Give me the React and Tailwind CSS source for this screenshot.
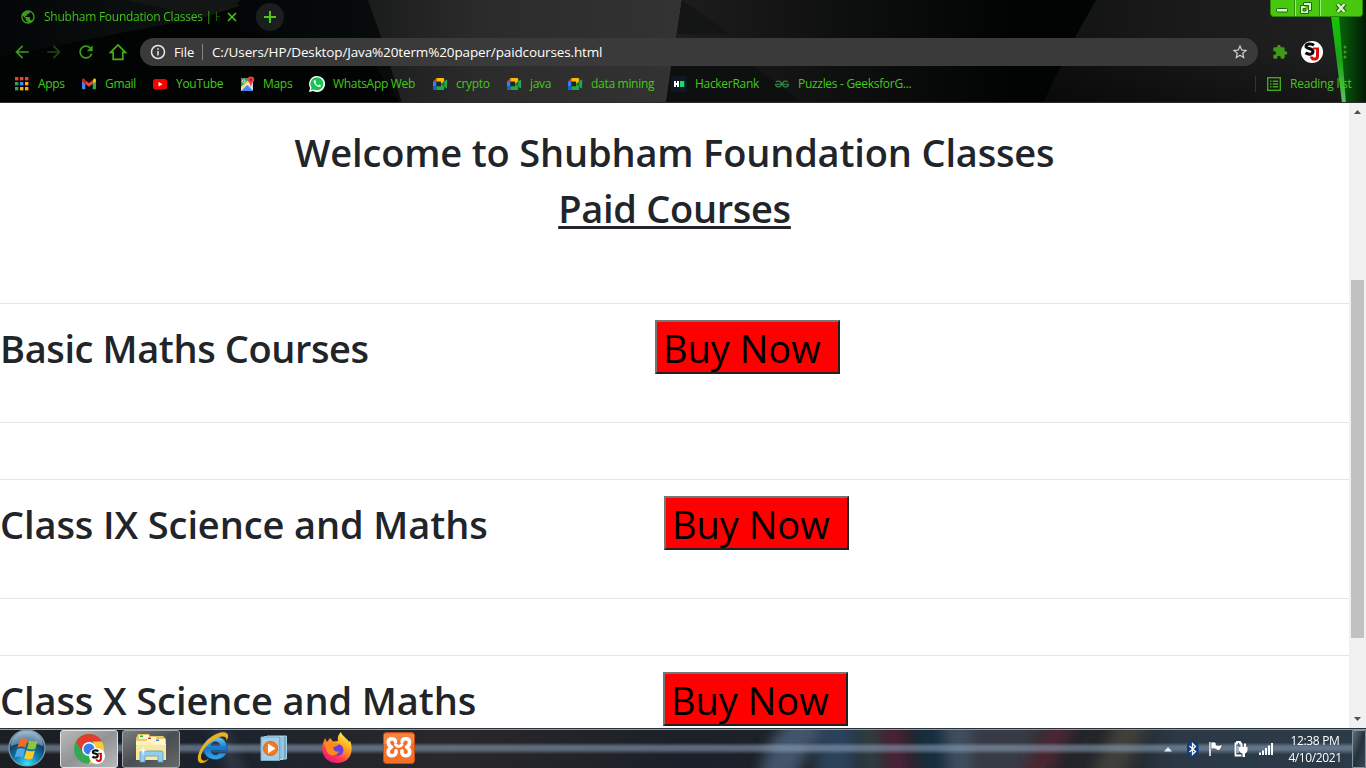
import React from "react";
import { SiGeeksforgeeks } from "react-icons/si";

const PATHS = {
  back: "M20 11H7.83l5.59-5.59L12 4l-8 8 8 8 1.41-1.41L7.83 13H20v-2z",
  forward: "M12 4l-1.41 1.41L16.17 11H4v2h12.17l-5.58 5.59L12 20l8-8z",
  reload:
    "M17.65 6.35C16.2 4.9 14.21 4 12 4c-4.42 0-7.99 3.58-7.99 8s3.57 8 7.99 8c3.73 0 6.84-2.55 7.73-6h-2.08c-.82 2.33-3.04 4-5.65 4-3.31 0-6-2.69-6-6s2.69-6 6-6c1.66 0 3.14.69 4.22 1.78L13 11h7V4l-2.35 2.35z",
  puzzle:
    "M20.5 11H19V7c0-1.1-.9-2-2-2h-4V3.5C13 2.12 11.88 1 10.5 1S8 2.12 8 3.5V5H4c-1.1 0-1.99.9-1.99 2v3.8H3.5c1.49 0 2.7 1.21 2.7 2.7s-1.21 2.7-2.7 2.7H2V20c0 1.1.9 2 2 2h3.8v-1.5c0-1.49 1.21-2.7 2.7-2.7 1.49 0 2.7 1.21 2.7 2.7V22H17c1.1 0 2-.9 2-2v-4h1.5c1.38 0 2.5-1.12 2.5-2.5S21.88 11 20.5 11z",
  star: "M22 9.24l-7.19-.62L12 2 9.19 8.63 2 9.24l5.46 4.73L5.82 21 12 17.27 18.18 21l-1.63-7.03L22 9.24zM12 15.4l-3.76 2.27 1-4.28-3.32-2.88 4.38-.38L12 6.1l1.71 4.04 4.38.38-3.32 2.88 1 4.28L12 15.4z",
  globe:
    "M12 2C6.48 2 2 6.48 2 12s4.48 10 10 10 10-4.48 10-10S17.52 2 12 2zm-1 17.93c-3.95-.49-7-3.85-7-7.93 0-.62.08-1.21.21-1.79L9 15v1c0 1.1.9 2 2 2v1.93zm6.9-2.54c-.26-.81-1-1.39-1.9-1.39h-1v-3c0-.55-.45-1-1-1H8v-2h2c.55 0 1-.45 1-1V7h2c1.1 0 2-.9 2-2v-.41c2.93 1.19 5 4.06 5 7.41 0 2.08-.8 3.97-2.1 5.39z",
};

function Glyph({ name, className }) {
  return (
    <svg viewBox="0 0 24 24" fill="currentColor" className={className}>
      <path d={PATHS[name]} />
    </svg>
  );
}

function ThemeArt() {
  return (
    <svg className="absolute inset-0 h-full w-full" viewBox="0 0 1366 103" preserveAspectRatio="none">
      <defs>
        <linearGradient id="tGray" x1="0" x2="1">
          <stop offset="0" stopColor="#1b1c1c" />
          <stop offset="0.35" stopColor="#2b2b2b" />
          <stop offset="1" stopColor="#333333" />
        </linearGradient>
        <linearGradient id="tLeft" x1="0" x2="1">
          <stop offset="0" stopColor="#030606" />
          <stop offset="1" stopColor="#121616" />
        </linearGradient>
        <linearGradient id="tMid" x1="0" x2="1">
          <stop offset="0" stopColor="#1e1e1e" />
          <stop offset="0.55" stopColor="#0d0e0e" />
          <stop offset="1" stopColor="#020303" />
        </linearGradient>
        <linearGradient id="tRight" x1="0" x2="1">
          <stop offset="0" stopColor="#111212" />
          <stop offset="0.5" stopColor="#1b1b1b" />
          <stop offset="1" stopColor="#202121" />
        </linearGradient>
        <linearGradient id="tShade" x1="0.3" y1="0" x2="0" y2="1">
          <stop offset="0.3" stopColor="#000" stopOpacity="0" />
          <stop offset="1" stopColor="#000" stopOpacity="0.500" />
        </linearGradient>
        <linearGradient id="tEdge" x1="0" x2="1">
          <stop offset="0" stopColor="#06720a" />
          <stop offset="1" stopColor="#041806" />
        </linearGradient>
        <linearGradient id="tBeam" x1="0" y1="0" x2="0" y2="1">
          <stop offset="0" stopColor="#14c60a" />
          <stop offset="0.5" stopColor="#18a515" />
          <stop offset="1" stopColor="#5fbf5f" />
        </linearGradient>
      </defs>
      <rect width="1366" height="103" fill="#020404" />
      <path d="M0 57L120 33 205 17 243 0H0z" fill="url(#tLeft)" />
      <path d="M205 17L240 6 235 0H125z" fill="#141616" />
      <path d="M240 0h440L666 103H400L375 66 240 30z" fill="url(#tLeft)" />
      <path d="M368 0h314L666 103H402L380 34z" fill="url(#tGray)" />
      <path d="M682 0h330v103H666z" fill="url(#tMid)" />
      <path d="M682 0l48 34h-53z" fill="#141515" />
      <path d="M671 66h82l50 37H666z" fill="#0e0f0f" />
      <path d="M1096 0h270v103H1043l34-69z" fill="url(#tRight)" />
      <path d="M1096 0h270v103H1043l34-69z" fill="url(#tShade)" />
      <path d="M1334 0h32v103h-20z" fill="url(#tEdge)" />
      <path d="M1331 16h8l7 87h-4z" fill="url(#tBeam)" />
      <rect y="102" width="1366" height="1" fill="#2a2b2b" />
    </svg>
  );
}

function AppsIcon() {
  const colors = ["#ea4335", "#ea4335", "#ea4335", "#34a05a", "#4285f4", "#fbab05", "#34a05a", "#fbab05", "#fbab05"];
  return (
    <svg viewBox="0 0 16 16" className="h-4 w-4">
      {colors.map((c, i) => (
        <rect key={i} x={1 + (i % 3) * 5} y={1 + Math.floor(i / 3) * 5} width="3.4" height="3.4" fill={c} />
      ))}
    </svg>
  );
}

function GmailIcon() {
  return (
    <svg viewBox="0 0 16 16" className="h-4 w-4">
      <path d="M1 4.3v8.2c0 .5.4.8.8.8h2.5V7z" fill="#4285f4" />
      <path d="M15 4.3v8.2c0 .5-.4.8-.8.8h-2.5V7z" fill="#34a853" />
      <path d="M11.7 4.4V8L15 5.400V4c0-1.300-1.500-1.900-2.400-1.200z" fill="#fbbc04" />
      <path d="M4.300 8V4.300L8 7.100l3.700-2.800V8L8 10.800z" fill="#ea4335" />
      <path d="M1 4v1.400L4.300 8V4.400l-.9-1.600C2.500 2.100 1 2.700 1 4z" fill="#c5221f" />
    </svg>
  );
}

function YouTubeIcon() {
  return (
    <svg viewBox="0 0 16 16" className="h-4 w-4">
      <rect x="1" y="3" width="14" height="10.500" rx="2.500" fill="#ff0000" />
      <path d="M6.500 6v4.500l4-2.250z" fill="#fff" />
    </svg>
  );
}

function MapsIcon() {
  return (
    <svg viewBox="0 0 16 16" className="h-4 w-4">
      <path d="M2 2.500h12v12.500H2z" fill="#f1f3f4" />
      <path d="M2 2.500h9L2 11z" fill="#2aa14d" />
      <path d="M2 15l6.300-6.300L14 14.500v.5z" fill="#4285f4" />
      <path d="M2 11.500l9-9h2L2 14z" fill="#fdd35a" />
      <path d="M8.300 8.700L14 14.500V7z" fill="#d9dbde" />
      <circle cx="4.700" cy="5.200" r="1.400" fill="none" stroke="#fff" strokeWidth="0.800" />
      <path d="M11.900.5a3.300 3.300 0 0 0-3.300 3.300c0 2.400 2.700 3 3.100 6.700h.4c.4-3.700 3.100-4.300 3.100-6.700A3.300 3.300 0 0 0 11.900.5z" fill="#ea4335" />
      <circle cx="11.900" cy="3.800" r="1.200" fill="#8f1d16" />
    </svg>
  );
}

function WhatsAppIcon() {
  return (
    <svg viewBox="0 0 16 16" className="h-4 w-4">
      <path d="M0 16l1.100-4.100A8 8 0 1 1 4.200 15z" fill="#fff" />
      <path d="M1.700 14.300l.8-2.800a6.500 6.500 0 1 1 2.200 2z" fill="#18c450" />
      <path d="M5.300 4.300c-1 .8-.8 2.200.6 4 1.500 2 3.600 3.100 5 2.600.8-.3 1.100-1 1-1.600L10 8.400l-.9 1C8 8.900 7 8 6.500 6.900l.7-.9-.8-1.800z" fill="#fff" />
    </svg>
  );
}

function MeetIcon() {
  return (
    <svg viewBox="0 0 16 16" className="h-4 w-4">
      <path d="M4.500 2v3.700H1z" fill="#ea4335" />
      <path d="M4.500 2h6.800c.5 0 .9.400.9.900V7L9 8V5.700H4.500z" fill="#fbb904" />
      <path d="M1 5.700h3.500v4.600H1z" fill="#2684fc" />
      <path d="M1 10.300h3.500V14H2c-.6 0-1-.400-1-1z" fill="#1565d8" />
      <path d="M4.500 5.700H9v4.600H4.500z" fill="#26231f" />
      <path d="M4.500 10.300H9V8l3.200 1v4c0 .6-.4 1-1 1H4.500z" fill="#22a94b" />
      <path d="M9 8l3.200-3v6z" fill="#147a37" />
      <path d="M12.200 5.500l2-1.700c.4-.3.900-.1.900.4v7.600c0 .5-.5.7-.9.4l-2-1.700z" fill="#22a94b" />
    </svg>
  );
}

function HackerRankIcon() {
  return (
    <svg viewBox="0 0 16 16" className="h-4 w-4">
      <rect width="16" height="16" rx="2" fill="#0e1722" />
      <path d="M3 5h2v2h1V5h2v6H6V9H5v2H3z" fill="#fff" />
      <rect x="9" y="5" width="4.300" height="6" fill="#10e06a" />
    </svg>
  );
}

const BOOKMARKS = [
  { label: "Apps", icon: <AppsIcon />, box: "w-[67px]" },
  { label: "Gmail", icon: <GmailIcon />, box: "w-[71px]" },
  { label: "YouTube", icon: <YouTubeIcon />, box: "w-[87px]" },
  { label: "Maps", icon: <MapsIcon />, box: "w-[70px]" },
  { label: "WhatsApp Web", icon: <WhatsAppIcon />, box: "w-[123px]" },
  { label: "crypto", icon: <MeetIcon />, box: "w-[74px]" },
  { label: "java", icon: <MeetIcon />, box: "w-[61px]" },
  { label: "data mining", icon: <MeetIcon />, box: "w-[104px]" },
  { label: "HackerRank", icon: <HackerRankIcon />, box: "w-[103px]" },
  {
    label: "Puzzles - GeeksforG...",
    icon: <SiGeeksforgeeks className="mx-px h-[14px] w-[14px] text-[#2f8d46]" />,
    box: "w-[150px]",
  },
];

function TabStrip() {
  return (
    <div className="relative flex h-[34px] items-center pl-5">
      <Glyph name="globe" className="h-4 w-4 text-[#3f9a1c]" />
      <div className="ml-2 h-[18px] w-[176px] bg-gradient-to-r from-[#43cb17] from-[93%] to-[#43cb17]/25 to-[100%] bg-clip-text text-xs leading-[18px] tracking-[-0.25px] whitespace-nowrap text-transparent">
        Shubham Foundation Classes | H
      </div>
      <svg viewBox="0 0 10 10" className="ml-[7px] h-[10px] w-[10px]" stroke="#4cc21b" strokeWidth="1.600">
        <path d="M1 1l8 8M9 1L1 9" />
      </svg>
      <div className="ml-[19px] flex h-7 w-7 items-center justify-center rounded-full bg-[#1b1e1e]">
        <svg viewBox="0 0 12 12" className="h-3 w-3" stroke="#4ccb14" strokeWidth="2">
          <path d="M6 0v12M0 6h12" />
        </svg>
      </div>
      <div className="absolute top-0 right-[3px] flex h-[17px] w-[93px] overflow-hidden rounded-b-[4px] border border-t-0 border-[#2d850a] bg-[#49c810]">
        <svg viewBox="0 0 91 16" className="h-4 w-[91px]">
          <path d="M24.500 0v16M49.500 0v16" stroke="#99ec70" strokeWidth="1" />
          <path d="M23.500 0v16M48.500 0v16" stroke="#2f900c" strokeWidth="1" />
          <rect x="5.500" y="8.500" width="11" height="3.500" rx="1" fill="#d6f7c6" stroke="#23660c" />
          <path d="M32.500 2.500h8v8h-3v3h-8v-8h3z" fill="#d6f7c6" stroke="#23660c" />
          <path d="M37.500 10.500v-5h-5M32 8.500h3v2.500h-3z" fill="#49c810" stroke="#23660c" />
          <path d="M66 4l8 8M74 4l-8 8" stroke="#23660c" strokeWidth="4.500" />
          <path d="M66.500 4l7 8M73.500 4l-7 8" stroke="#d6f7c6" strokeWidth="2.500" />
        </svg>
      </div>
    </div>
  );
}

function AvatarLogo({ className }) {
  return (
    <svg viewBox="0 0 20 20" className={className} fill="none">
      <path d="M12 3.200C9 1 4 2 4 4.500s7 1.500 7 4.800-4.500 3.800-7.500 1.500" stroke="#0a0a0a" strokeWidth="3" />
      <path d="M15.500 6v8c0 4-6 4-6 .5" stroke="#dc0a0a" strokeWidth="3" />
      <path d="M11 6.500h6" stroke="#dc0a0a" strokeWidth="2" />
    </svg>
  );
}

function Toolbar() {
  return (
    <div className="relative flex h-9 items-center pl-3 text-[#3f9a1c]">
      <Glyph name="back" className="h-5 w-5" />
      <Glyph name="forward" className="ml-3 h-5 w-5 text-[#1e4711]" />
      <Glyph name="reload" className="ml-3 h-5 w-5" />
      <svg viewBox="0 0 20 20" className="ml-3 h-5 w-5" fill="none" stroke="#43b018" strokeWidth="1.700">
        <path d="M2.600 10.300L10 3l7.400 7.300H14.800v7H5.200v-7z" />
      </svg>
      <div className="ml-3 flex h-7 w-[1118px] items-center rounded-full bg-[#3a3a3a] pl-[10px] text-[13px] text-white">
        <svg viewBox="0 0 16 16" className="h-4 w-4" fill="none" stroke="#e8e8e8" strokeWidth="1.500">
          <circle cx="8" cy="8" r="6.500" />
          <path d="M8 7v4.500M8 4.300v1.500" />
        </svg>
        <span className="ml-2 w-7 pt-px tracking-[-0.1px] whitespace-nowrap">File</span>
        <span className="h-4 w-px bg-[#858585]" />
        <span className="ml-[9px] flex-1 pt-px text-[13.5px] tracking-[-0.13px] whitespace-nowrap">
          C:/Users/HP/Desktop/Java%20term%20paper/paidcourses.html
        </span>
        <Glyph name="star" className="mr-[9px] h-[18px] w-[18px] text-[#cfcfcf]" />
      </div>
      <Glyph name="puzzle" className="ml-[14px] h-4 w-4" />
      <div className="ml-[13px] flex h-[22px] w-[22px] items-center justify-center rounded-full bg-white">
        <AvatarLogo className="h-5 w-5" />
      </div>
      <svg viewBox="0 0 4 14" className="ml-5 h-[14px] w-1" fill="#3f9a1c">
        <circle cx="2" cy="2" r="1.500" />
        <circle cx="2" cy="7" r="1.500" />
        <circle cx="2" cy="12" r="1.500" />
      </svg>
    </div>
  );
}

function BookmarksBar() {
  return (
    <div className="relative flex h-[33px] items-center pb-[5px] pl-[14px] text-xs text-[#43cb17]">
      {BOOKMARKS.map((b) => (
        <div key={b.label} className={"flex shrink-0 items-center gap-2 whitespace-nowrap " + b.box}>
          <span className="w-4 shrink-0">{b.icon}</span>
          <span className="tracking-[-0.3px]">{b.label}</span>
        </div>
      ))}
      <div className="ml-auto flex items-center pr-[14px]">
        <span className="mr-[11px] h-4 w-px bg-[#234217]" />
        <svg viewBox="0 0 14 14" className="h-[14px] w-[14px]" fill="none" stroke="#3fa81c" strokeWidth="1.400">
          <rect x="0.700" y="0.700" width="12.600" height="12.600" />
          <path d="M3 4.200h1.500M3 7h1.500M3 9.800h1.500M5.700 4.200h5.500M5.700 7h5.500M5.700 9.800h5.500" />
        </svg>
        <span className="ml-[9px] w-[62px] tracking-[-0.22px] whitespace-nowrap">Reading list</span>
      </div>
    </div>
  );
}

const COURSES = [
  { name: "Basic Maths Courses", box: "w-[655px]", track: "tracking-[-0.4px]" },
  { name: "Class IX Science and Maths", box: "w-[664px]", track: "tracking-[-0.1px]" },
  { name: "Class X Science and Maths", box: "w-[663px]", track: "tracking-[-0.1px]" },
];

function Course({ course }) {
  return (
    <section className="mb-14 flex h-[120px] shrink-0 items-start border-y border-[#e5e5e6] pt-4">
      <h2 className={"shrink-0 pt-1 text-[38px] leading-[48px] font-semibold whitespace-nowrap " + course.box + " " + course.track}>
        {course.name}
      </h2>
      <button className="h-[54px] w-[185px] border-2 border-t-[#767676] border-r-[#212121] border-b-[#212121] border-l-[#767676] bg-[#ff0000] pt-[3px] pl-[6px] text-left text-[38px] leading-[47px] whitespace-nowrap text-black">
        Buy Now
      </button>
    </section>
  );
}

function Scrollbar() {
  return (
    <div className="flex w-[17px] shrink-0 flex-col items-center bg-[#f1f1f1]">
      <svg viewBox="0 0 17 17" className="h-[17px] w-[17px]">
        <path d="M5 11h7L8.500 7z" fill="#505050" />
      </svg>
      <div className="mt-[160px] h-[358px] w-[13px] bg-[#c1c1c1]" />
      <svg viewBox="0 0 17 17" className="mt-auto h-[17px] w-[17px]">
        <path d="M5 6h7l-3.500 4z" fill="#505050" />
      </svg>
    </div>
  );
}

function StartOrb() {
  return (
    <svg viewBox="0 0 38 38" className="h-[38px] w-[38px]">
      <defs>
        <radialGradient id="orb" cx="0.5" cy="0.95" r="0.9">
          <stop offset="0" stopColor="#3ee4fb" />
          <stop offset="0.35" stopColor="#1286b8" />
          <stop offset="0.7" stopColor="#10426b" />
          <stop offset="1" stopColor="#7ba1bb" />
        </radialGradient>
      </defs>
      <circle cx="19" cy="19" r="18" fill="url(#orb)" stroke="#7d9cb0" strokeWidth="1.200" />
      <path d="M3 17a16 15 0 0 1 32 0c-9-4-23-4-32 0z" fill="#c6dcea" opacity="0.4" />
      <g transform="translate(-2.200 -2) scale(1.170)">
        <path d="M12 10.500c2.500-1.300 4.500-1 6.800.3l-2 7c-2.200-1.300-4.300-1.400-6.800-.2z" fill="#f06a28" />
        <path d="M20 11.300c2.300 1.200 4.600 1.300 7.300.2l-2 7c-2.500 1.200-4.700 1-7.100-.2z" fill="#8cc63e" />
        <path d="M9.600 19c2.400-1.200 4.500-1.100 6.800.2l-2 7c-2.300-1.300-4.300-1.300-6.800-.2z" fill="#52a9e8" />
        <path d="M17.700 19.800c2.400 1.200 4.600 1.300 7.200.2l-2 7c-2.500 1.200-4.800 1-7.200-.2z" fill="#fcc927" />
      </g>
    </svg>
  );
}

function ChromeIcon() {
  return (
    <div className="relative h-8 w-8">
      <svg viewBox="0 0 32 32" className="h-8 w-8">
        <circle cx="16" cy="16" r="15" fill="#34a853" />
        <path d="M3 8.500A15 15 0 0 1 29 8.500H16L10 20z" fill="#e33b2e" />
        <path d="M29 8.500A15 15 0 0 1 15.500 31l7-11.500L20 8.500z" fill="#fcc934" />
        <circle cx="16" cy="16" r="7" fill="#fff" />
        <circle cx="16" cy="16" r="5.500" fill="#3b7ded" />
      </svg>
      <div className="absolute top-[15px] left-[16px] h-4 w-4 rounded-full bg-white p-px">
        <AvatarLogo className="h-[14px] w-[14px]" />
      </div>
    </div>
  );
}

function FolderIcon() {
  return (
    <svg viewBox="0 0 34 32" className="h-8 w-[34px]">
      <path d="M3 3l1-2h11l1 2h13l3 3v20H2V5z" fill="#e9c869" />
      <path d="M5 2h10v4H5zM13 4h9v4h-9zM21 6h10v5H21z" fill="#fff7d0" />
      <path d="M6 2.500h3v1.500H6z" fill="#2cae3c" />
      <path d="M14 4.500h3V6h-3z" fill="#d63b28" />
      <path d="M22 6.500h3V8h-3z" fill="#3b82d6" />
      <path d="M2 8h18l2 3h10v16H2z" fill="#f9e7a0" />
      <path d="M2 8h18l2 3h10v1H2z" fill="#fff3c2" />
      <path d="M6 29v-9c0-1.500.5-2 2-2h19c1.500 0 2 .5 2 2v9h-5v-6H11v6z" fill="#93cdec" stroke="#579bc7" strokeWidth="0.800" />
      <path d="M9 13l.8 4 3.200.8-3.200.8L9 23l-.8-4.400L5 17.800l3.200-.8z" fill="#fff" />
    </svg>
  );
}

function ExplorerIcon() {
  return (
    <svg viewBox="0 0 34 34" className="h-[34px] w-[34px]">
      <defs>
        <linearGradient id="ie" x1="0" y1="0" x2="0" y2="1">
          <stop offset="0" stopColor="#79cdf7" />
          <stop offset="0.5" stopColor="#1676c8" />
          <stop offset="1" stopColor="#36a9ee" />
        </linearGradient>
      </defs>
      <path
        d="M31 19.500H15c.5 5 6 5.500 8 2.500h7.500C27 31 8.500 31.500 7.500 18 7 2.500 31 1 31 17zM15 14.500h9c-.5-5-8.500-5-9 0z"
        fill="url(#ie)"
        stroke="#0a4887"
        strokeWidth="0.600"
      />
      <path d="M30.500 9.500C31 3 22 5 13 12.500 5 20 3 28 7 29.500c2 .6 4-.5 6-2-3 4-7 5.500-9.500 4C-1 28 4 16 12 8.500 20 1.500 29-.5 31.500 3c1.200 1.800.5 4-1 6.500z" fill="#eab221" />
    </svg>
  );
}

function MediaIcon() {
  return (
    <svg viewBox="0 0 28 28" className="h-7 w-7">
      <path d="M7 2h19.500v23H7z" fill="#73a9cb" stroke="#a9cde0" />
      <path d="M4 2.500h19v23H4z" fill="#8fbdd9" stroke="#b6d7e9" />
      <path d="M1 3h18.500v23.500H1z" fill="#a7cde4" stroke="#77abc9" />
      <circle cx="10.500" cy="14.500" r="7" fill="#f37a1d" stroke="#e0660b" />
      <path d="M8 9.500v10l7.500-5z" fill="#fff" />
    </svg>
  );
}

function FirefoxIcon() {
  return (
    <svg viewBox="0 0 32 32" className="h-8 w-8">
      <defs>
        <linearGradient id="fox" x1="0.85" y1="0.1" x2="0.3" y2="1">
          <stop offset="0" stopColor="#fff13a" />
          <stop offset="0.4" stopColor="#ff9b22" />
          <stop offset="0.75" stopColor="#ff3750" />
          <stop offset="1" stopColor="#e31587" />
        </linearGradient>
      </defs>
      <path d="M20 0c1 4 6 6 8 10l1-1.500C33 18 30 31 16 31 5 31-1 22 2 11l2-5 2 4 3-4 3 3.500 5-.5C16 5 18 2 20 0z" fill="url(#fox)" />
      <circle cx="16.500" cy="18" r="6" fill="#6a43d6" />
      <path d="M3 11c3-2 7-1.500 9 0l6 .8c-1 3-5 2-6 4.200 1 3 3 4 6 3.500-3 6-12 5-13-3z" fill="#ff8a1c" />
    </svg>
  );
}

function XamppIcon() {
  return (
    <svg viewBox="0 0 32 32" className="h-8 w-8">
      <rect x="0.500" y="0.500" width="31" height="31" rx="3" fill="#f3702b" stroke="#c44c10" />
      <path d="M1 2h30v8C20 7 10 8 1 12z" fill="#f89a62" opacity="0.5" />
      <g fill="none" stroke="#fff" strokeWidth="3.600" strokeLinecap="round" strokeLinejoin="round">
        <path d="M12.500 9.500C12 7.600 10.800 6.800 9 6.800c-4.800 0-5 6-.5 8.200-4.700 2.500-4.200 8.700.5 8.700 3.200 0 4.500-2.200 4-5" />
        <path d="M19 9.500c.5-1.900 2-2.700 3.800-2.700 4.700 0 5 6 .7 8.200 4.700 2.500 4 8.700-.7 8.700-3.200 0-4.300-2.200-3.800-5" />
        <path d="M12.500 12.500c1.500 2.500 5 2.500 6.500 0" strokeWidth="3" />
      </g>
    </svg>
  );
}

function TrayIcons() {
  return (
    <svg viewBox="0 0 112 20" className="h-5 w-28">
      <path d="M1 12.500L5 8l4 4.500z" fill="#e7edf2" />
      <rect x="24" y="2" width="11.500" height="16" rx="5.500" fill="#0f3a7c" />
      <path d="M26.500 7l6 5.500-3 3v-11l3 3-6 5.500" fill="none" stroke="#fff" strokeWidth="1.300" />
      <path d="M47 3v14" stroke="#fff" strokeWidth="1.500" />
      <path d="M48 3.500c2-.8 4-.5 5 .5v2c2 .7 4 .5 6-.5v1.500l-2 4c-2 .8-3 .3-4-.8-2-.8-3-.7-5 0z" fill="#fff" stroke="#18222c" strokeWidth="0.500" />
      <path d="M79 4.500h-2v-1.500h-3v1.500h-1.500v12h6" fill="none" stroke="#fff" strokeWidth="1.800" />
      <path d="M74.500 7h1v7h-1z" fill="#fff" />
      <path d="M76 8h8.500v3c0 2.500-2.500 3.500-2.500 3.500V18h-2.500v-3.500S76 13.500 76 11zM77.500 4.500h2V8h-2zM81 4.500h2V8h-2z" fill="#fff" />
      <path d="M96 13.500h2V16h-2zM99 11.500h2V16h-2zM102 9h2v7h-2zM105 6.500h2V16h-2zM108 4h2v12h-2z" fill="#fff" />
    </svg>
  );
}

function TaskbarBackdrop() {
  return (
    <svg className="absolute inset-0 h-full w-full" viewBox="0 0 1366 40" preserveAspectRatio="none">
      <defs>
        <filter id="soft" filterUnits="userSpaceOnUse" x="0" y="-20" width="1366" height="80">
          <feGaussianBlur stdDeviation="7 4" />
        </filter>
        <linearGradient id="base" x1="0" x2="1">
          <stop offset="0" stopColor="#1b1e23" />
          <stop offset="0.16" stopColor="#1c232d" />
          <stop offset="0.33" stopColor="#292829" />
          <stop offset="0.5" stopColor="#1c2028" />
          <stop offset="0.82" stopColor="#24262a" />
          <stop offset="0.86" stopColor="#2a3945" />
          <stop offset="1" stopColor="#2c3b48" />
        </linearGradient>
        <linearGradient id="glow" x1="0" y1="0" x2="0" y2="1">
          <stop offset="0.36" stopColor="#8ea5bd" stopOpacity="0" />
          <stop offset="0.46" stopColor="#8ea5bd" stopOpacity="0.550" />
          <stop offset="0.54" stopColor="#8ea5bd" stopOpacity="0.550" />
          <stop offset="0.66" stopColor="#8ea5bd" stopOpacity="0" />
        </linearGradient>
      </defs>
      <rect width="1366" height="40" fill="url(#base)" />
      <g filter="url(#soft)">
        <path d="M758 50l12-36 20-24h34l-10 24-20 36z" fill="#42546a" />
        <path d="M816-10h40v60h-40z" fill="#29435a" />
        <path d="M858-10h18l6 60h-18z" fill="#323f42" />
        <path d="M878-10h22l12 60h-24z" fill="#4c2138" />
        <path d="M914-10h38v60h-30z" fill="#182d3f" />
        <path d="M944-10h26v60h-20z" fill="#404f61" />
        <path d="M970-10h74l-24 60h-50z" fill="#383a45" />
        <path d="M1050-10h28l-30 60h-30z" fill="#482730" />
        <path d="M1118-10h34l-30 60h-32z" fill="#40413a" />
        <path d="M216-6l22 52" stroke="#4d5c6e" strokeWidth="9" opacity="0.600" />
      </g>
      <rect width="1366" height="40" fill="url(#glow)" />
      <rect width="1366" height="1" fill="#273137" />
      <rect y="1" width="1366" height="1" fill="#8e9ba3" />
    </svg>
  );
}

function Taskbar() {
  return (
    <footer className="relative h-10 shrink-0 overflow-hidden">
      <TaskbarBackdrop />
      <div className="relative flex h-10 items-center">
        <div className="ml-2 h-[38px] w-[38px]">
          <StartOrb />
        </div>
        <div className="mt-px ml-[14px] flex h-[38px] w-[58px] items-center justify-center rounded-[3px] border border-[#e2e2e2] bg-gradient-to-br from-[#b9b9ba] via-[#929394] to-[#b6b7b8]">
          <ChromeIcon />
        </div>
        <div className="mt-px ml-1 flex h-[38px] w-[58px] items-center justify-center rounded-[3px] border border-[#a4a7a9] bg-gradient-to-br from-[#7c7f81] via-[#4a4e51] to-[#64686b]">
          <FolderIcon />
        </div>
        <div className="ml-4">
          <ExplorerIcon />
        </div>
        <div className="ml-[30px]">
          <MediaIcon />
        </div>
        <div className="ml-[33px]">
          <FirefoxIcon />
        </div>
        <div className="ml-[30px]">
          <XamppIcon />
        </div>
        <div className="mt-px ml-auto">
          <TrayIcons />
        </div>
        <div className="ml-[5px] w-[70px] pt-[2px] text-center text-xs leading-[17px] text-white">
          <div className="tracking-[-0.35px] whitespace-nowrap">12:38 PM</div>
          <div className="tracking-[-0.4px] whitespace-nowrap">4/10/2021</div>
        </div>
        <div className="mt-px ml-[2px] h-[38px] w-[14px] rounded-[1px] border border-[#8293a0] bg-gradient-to-br from-[#64717b] via-[#26323c] to-[#384853]" />
      </div>
    </footer>
  );
}

export default function App() {
  return (
    <div className="flex h-[768px] w-[1366px] flex-col overflow-hidden bg-white font-['Open_Sans','Noto_Sans',sans-serif]">
      <header className="relative h-[103px] shrink-0">
        <ThemeArt />
        <TabStrip />
        <Toolbar />
        <BookmarksBar />
      </header>
      <div className="flex h-[625px] shrink-0">
        <main className="flex h-full flex-1 flex-col overflow-hidden pt-[25px] text-[#212529]">
          <h1 className="h-14 shrink-0 text-center text-[38px] leading-[48px] font-semibold tracking-[-0.17px] whitespace-nowrap">
            Welcome to Shubham Foundation Classes
          </h1>
          <h1 className="mb-[63px] h-14 shrink-0 text-center text-[38px] leading-[48px] font-semibold tracking-[-0.3px] whitespace-nowrap underline decoration-[3px] underline-offset-[3px]">
            Paid Courses
          </h1>
          {COURSES.map((c) => (
            <Course key={c.name} course={c} />
          ))}
        </main>
        <Scrollbar />
      </div>
      <Taskbar />
    </div>
  );
}
